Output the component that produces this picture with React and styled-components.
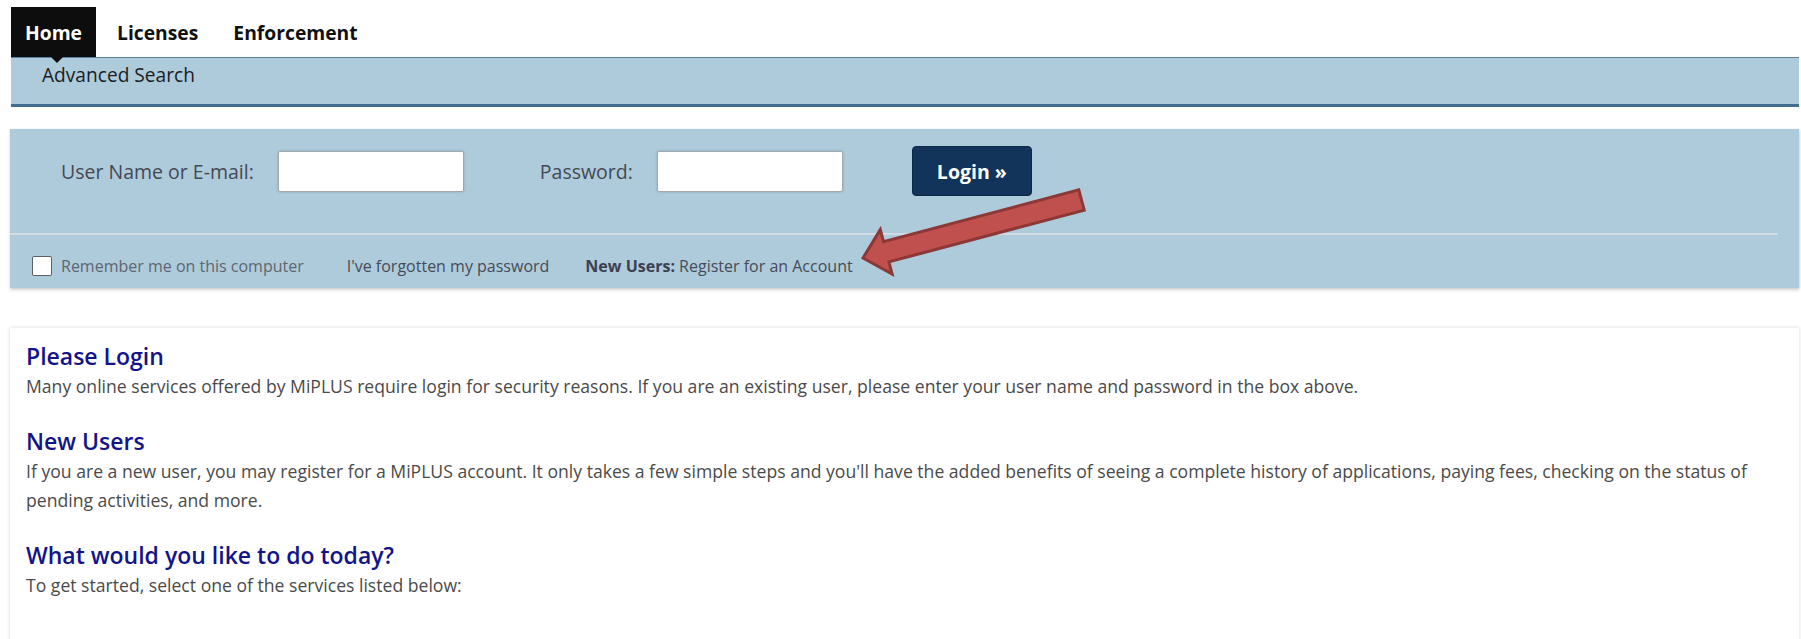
import React from "react";
import styled, { createGlobalStyle } from "styled-components";

const GlobalStyle = createGlobalStyle`
  html, body {
    margin: 0;
    padding: 0;
    background: #ffffff;
    overflow: hidden;
  }
  body {
    font-family: "Open Sans", "Noto Sans", sans-serif;
    color: #4d4d4d;
  }
  * { box-sizing: border-box; }
`;

const Page = styled.div`
  position: relative;
  padding: 7px 2px 0 10px;
  min-height: 639px;
`;

/* ---------- top tabs ---------- */
const TopTabs = styled.nav`
  display: flex;
  padding-left: 1px;
  height: 50px;
`;

const Tab = styled.a`
  position: relative;
  z-index: 2;
  display: flex;
  align-items: center;
  height: 50px;
  padding: 0 14px;
  margin-right: 7px;
  font-size: 19.3px;
  font-weight: 700;
  color: ${(p) => (p.$active ? "#ffffff" : "#111111")};
  background: ${(p) => (p.$active ? "#0d0d0d" : "transparent")};
  text-decoration: none;
  cursor: pointer;
`;

const Caret = styled.span`
  position: absolute;
  top: 100%;
  left: 40px;
  width: 0;
  height: 0;
  border-left: 6px solid transparent;
  border-right: 6px solid transparent;
  border-top: 6px solid #0d0d0d;
`;

const SubNav = styled.div`
  margin-left: 1px;
  height: 50px;
  background: #aecbdc;
  border-top: 1px solid #5a82a0;
  border-bottom: 3px solid #426d8e;
  padding: 4px 0 0 31px;
`;

const SubLink = styled.a`
  font-size: 19.15px;
  line-height: 26px;
  color: #1c1c1c;
  text-decoration: none;
`;

/* ---------- login panel ---------- */
const LoginPanel = styled.section`
  margin-top: 22px;
  background: #aecbdc;
  box-shadow: 0 2px 3px rgba(0, 0, 0, 0.18), 1px 0 2px rgba(0, 0, 0, 0.08);
  height: 159px;
`;

const FieldRow = styled.div`
  display: flex;
  align-items: center;
  padding: 17px 0 0 51px;
  height: 67px;
`;

const FieldLabel = styled.label`
  font-size: 19.5px;
  color: #454952;
  margin-left: ${(p) => p.$offset || 0}px;
`;

const TextInput = styled.input`
  width: 186px;
  height: 41px;
  margin-left: 24px;
  border: 1px solid #a3a8ad;
  border-radius: 2px;
  background: #ffffff;
  box-shadow: 0 0 3px rgba(0, 0, 0, 0.18);
  font: inherit;
  outline: none;
`;

const LoginButton = styled.button`
  margin-left: 69px;
  width: 120px;
  height: 50px;
  border: 1px solid #0c2846;
  border-radius: 4px;
  background: #12345a;
  color: #ffffff;
  font-family: inherit;
  font-size: 19.5px;
  font-weight: 700;
  cursor: pointer;
`;

const Divider = styled.hr`
  margin: 37px 21px 0 0;
  height: 2px;
  border: 0;
  background: #d3dce3;
`;

const OptionsRow = styled.div`
  display: flex;
  align-items: center;
  padding: 9px 0 0 22px;
  height: 53px;
  font-size: 16px;
`;

const CheckLabel = styled.label`
  display: flex;
  align-items: center;
  color: #5f6670;
  cursor: pointer;
`;

const CheckBox = styled.span`
  width: 20px;
  height: 20px;
  margin-right: 9px;
  background: #ffffff;
  border: 1px solid #5b5f66;
  border-radius: 2px;
`;

const PanelLink = styled.a`
  margin-left: ${(p) => p.$offset}px;
  color: #474b57;
  text-decoration: none;
  cursor: pointer;

  b {
    font-weight: 700;
    color: #3d4050;
  }
`;

/* callout arrow laid over the panel */
const Callout = styled.svg`
  position: absolute;
  left: 850px;
  top: 180px;
  width: 250px;
  height: 110px;
  overflow: visible;
  pointer-events: none;
`;

/* ---------- info card ---------- */
const InfoCard = styled.main`
  margin-top: 40px;
  min-height: 320px;
  background: #ffffff;
  box-shadow: 0 0 4px rgba(0, 0, 0, 0.16);
  padding: 12px 16px;
`;

const Heading = styled.h2`
  margin: 0;
  font-size: 23px;
  font-weight: 600;
  line-height: 32px;
  color: #13138a;
`;

const Body = styled.p`
  margin: 0 0 24px;
  font-size: 17.6px;
  line-height: 29px;
  color: #4a4a4a;
`;

const sections = [
  {
    title: "Please Login",
    text: "Many online services offered by MiPLUS require login for security reasons. If you are an existing user, please enter your user name and password in the box above.",
  },
  {
    title: "New Users",
    text: "If you are a new user, you may register for a MiPLUS account. It only takes a few simple steps and you'll have the added benefits of seeing a complete history of applications, paying fees, checking on the status of pending activities, and more.",
  },
  {
    title: "What would you like to do today?",
    text: "To get started, select one of the services listed below:",
  },
];

export default function App() {
  return (
    <>
      <GlobalStyle />
      <Page>
        <TopTabs>
          <Tab $active>
            Home
            <Caret />
          </Tab>
          <Tab>Licenses</Tab>
          <Tab>Enforcement</Tab>
        </TopTabs>

        <SubNav>
          <SubLink>Advanced Search</SubLink>
        </SubNav>

        <LoginPanel>
          <FieldRow>
            <FieldLabel>User Name or E-mail:</FieldLabel>
            <TextInput type="text" />
            <FieldLabel $offset={76}>Password:</FieldLabel>
            <TextInput type="password" />
            <LoginButton>Login »</LoginButton>
          </FieldRow>
          <Divider />
          <OptionsRow>
            <CheckLabel>
              <CheckBox />
              Remember me on this computer
            </CheckLabel>
            <PanelLink $offset={43}>I've forgotten my password</PanelLink>
            <PanelLink $offset={36}>
              <b>New Users:</b> Register for an Account
            </PanelLink>
          </OptionsRow>
        </LoginPanel>

        <Callout viewBox="0 0 250 110">
          <polygon
            points="13,78 30.3,49.6 33.5,61.7 228.8,9.9 234.2,30.1 38.9,81.9 42.1,94"
            fill="#c0504d"
            stroke="#8c3836"
            strokeWidth="3"
            strokeLinejoin="miter"
          />
        </Callout>

        <InfoCard>
          {sections.map((s) => (
            <React.Fragment key={s.title}>
              <Heading>{s.title}</Heading>
              <Body>{s.text}</Body>
            </React.Fragment>
          ))}
        </InfoCard>
      </Page>
    </>
  );
}
